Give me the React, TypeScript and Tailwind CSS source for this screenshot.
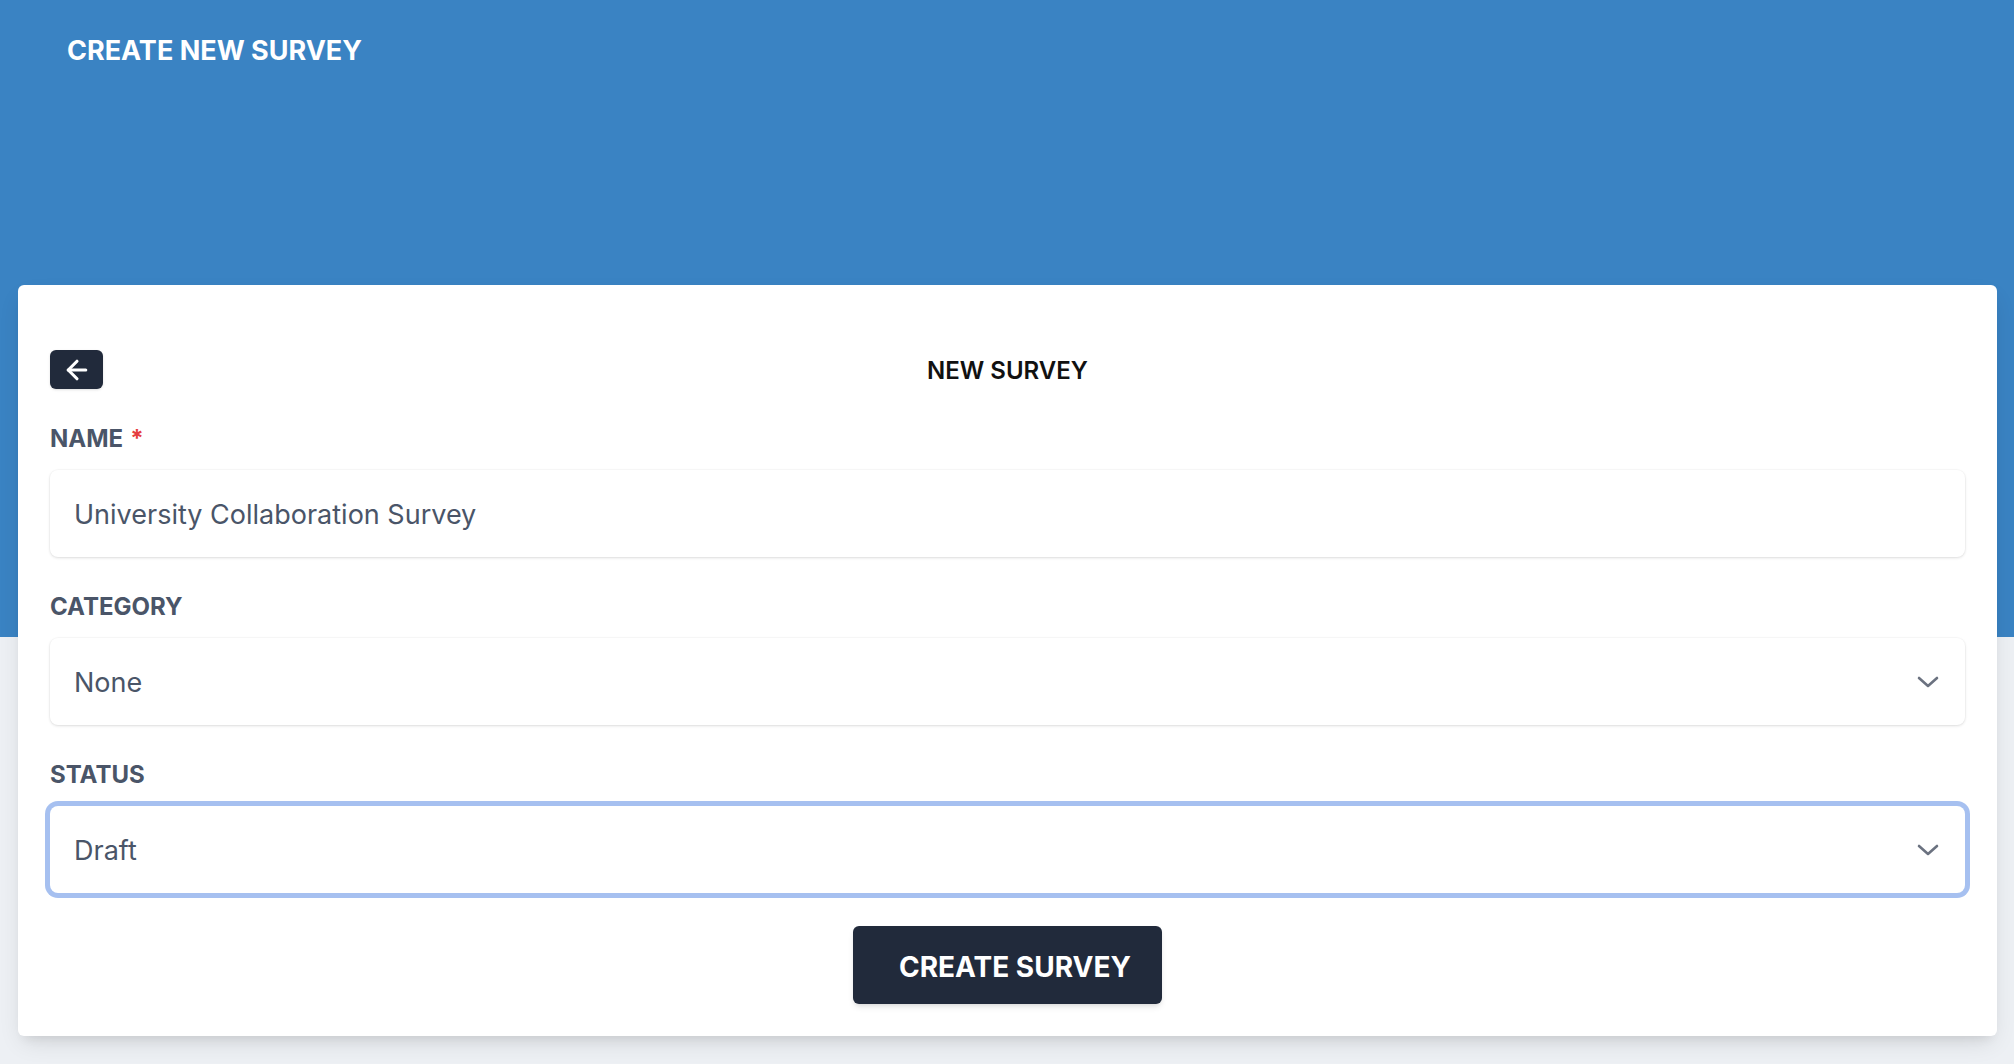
import React from "react";
import { ArrowLeft } from "lucide-react";

const Label = ({ text, required }: { text: string; required?: boolean }) => (
  <label className="mt-[36px] mb-[17px] block text-[24px] font-bold leading-[28px] text-[#4a5568]">
    {text}
    {required && <span className="ml-[7px] text-[#e53e3e]">*</span>}
  </label>
);

const Chevron = () => (
  <svg viewBox="0 0 22 12" className="h-[12px] w-[22px] text-[#6b7280]" fill="none">
    <polyline
      points="2,2 11,10 20,2"
      stroke="currentColor"
      strokeWidth="2.6"
      strokeLinecap="round"
      strokeLinejoin="round"
    />
  </svg>
);

const Select = ({ value, focused }: { value: string; focused?: boolean }) => (
  <div
    className={
      focused
        ? "flex h-[87px] items-center justify-between rounded-[8px] bg-white pl-[24px] pr-[26px] ring-[5px] ring-[#a6c0f0] shadow-sm"
        : "flex h-[87px] items-center justify-between rounded-[8px] bg-white pl-[24px] pr-[26px] shadow-[0_1px_3px_rgba(0,0,0,0.12),0_0_0_1px_rgba(0,0,0,0.02)]"
    }
  >
    <span className="pt-[3px] text-[27px] text-[#4a5568]">{value}</span>
    <Chevron />
  </div>
);

const App = () => {
  return (
    <div className="min-h-screen bg-[#edf0f4] font-['Inter','Liberation_Sans',sans-serif]">
      {/* Header */}
      <div className="h-[637px] bg-[#3a83c3] px-[67px] pt-[33px]">
        <h1 className="text-[27px] font-bold leading-[36px] text-white">CREATE NEW SURVEY</h1>
      </div>

      {/* Card */}
      <div className="relative mx-[17px] ml-[18px] -mt-[352px] rounded-[6px] bg-white px-[32px] pt-[65px] pb-[32px] shadow-[0_10px_25px_-5px_rgba(0,0,0,0.12),0_8px_10px_-6px_rgba(0,0,0,0.08)]">
        <div className="grid grid-cols-[1fr_auto_1fr] items-center">
          <div>
            <button
              type="button"
              className="flex h-[39px] w-[53px] items-center justify-center rounded-[6px] bg-[#212a3b] shadow-sm"
            >
              <ArrowLeft className="h-[30px] w-[30px] text-white" strokeWidth={2.5} />
            </button>
          </div>
          <h2 className="pt-[2px] text-[24px] font-semibold leading-[28px] text-[#111]">NEW SURVEY</h2>
          <div />
        </div>

        <Label text="NAME" required />
        <div className="flex h-[87px] items-center rounded-[8px] bg-white pl-[24px] shadow-[0_1px_3px_rgba(0,0,0,0.12),0_0_0_1px_rgba(0,0,0,0.02)]">
          <span className="pt-[3px] text-[27px] text-[#4a5568]">University Collaboration Survey</span>
        </div>

        <Label text="CATEGORY" />
        <Select value="None" />

        <Label text="STATUS" />
        <Select value="Draft" focused />

        <div className="mt-[33px] flex justify-center">
          <button
            type="button"
            className="h-[78px] w-[309px] rounded-[6px] bg-[#212a3b] pl-[46px] pt-[3px] text-left text-[28px] font-bold text-white shadow-md"
          >
            CREATE SURVEY
          </button>
        </div>
      </div>
    </div>
  );
};

export default App;
